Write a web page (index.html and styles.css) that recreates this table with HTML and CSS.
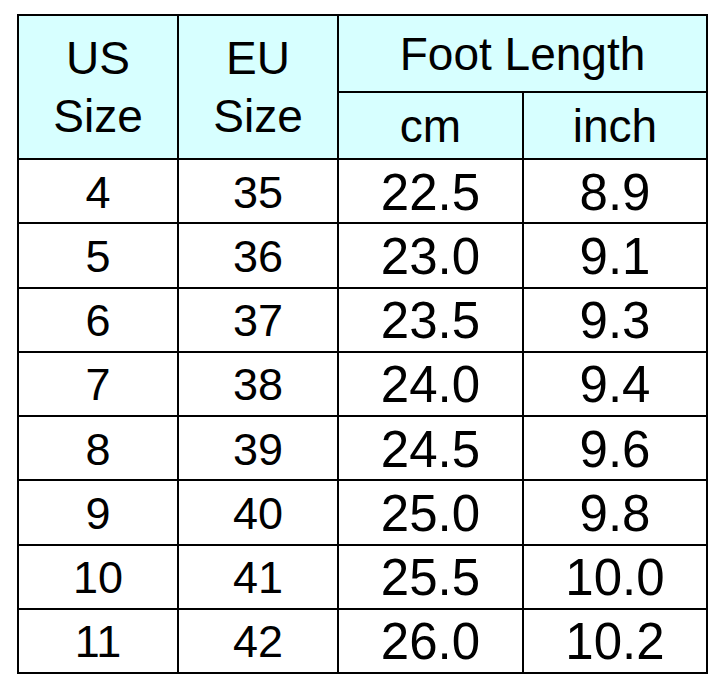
FILE: index.html
```html
<!DOCTYPE html>
<html>
<head>
<meta charset="utf-8">
<link rel="stylesheet" href="styles.css">
</head>
<body>
<div class="chart">
  <div class="cell head span-rows">US<br>Size</div>
  <div class="cell head span-rows">EU<br>Size</div>
  <div class="cell head span-cols">Foot Length</div>
  <div class="cell head">cm</div>
  <div class="cell head">inch</div>

  <div class="cell">4</div><div class="cell">35</div><div class="cell big">22.5</div><div class="cell big">8.9</div>
  <div class="cell">5</div><div class="cell">36</div><div class="cell big">23.0</div><div class="cell big">9.1</div>
  <div class="cell">6</div><div class="cell">37</div><div class="cell big">23.5</div><div class="cell big">9.3</div>
  <div class="cell">7</div><div class="cell">38</div><div class="cell big">24.0</div><div class="cell big">9.4</div>
  <div class="cell">8</div><div class="cell">39</div><div class="cell big">24.5</div><div class="cell big">9.6</div>
  <div class="cell">9</div><div class="cell">40</div><div class="cell big">25.0</div><div class="cell big">9.8</div>
  <div class="cell">10</div><div class="cell">41</div><div class="cell big">25.5</div><div class="cell big">10.0</div>
  <div class="cell">11</div><div class="cell">42</div><div class="cell big">26.0</div><div class="cell big">10.2</div>
</div>
</body>
</html>
```

FILE: styles.css
```css
html, body {
  margin: 0;
  padding: 0;
  background: #ffffff;
}

.chart {
  margin: 14px 0 0 17px;
  display: inline-grid;
  grid-template-columns: 158px 158px 183px 182px;
  grid-template-rows: 75px 65px repeat(8, 62.25px);
  gap: 2px;
  padding: 2px;
  background: #000000;
  font-family: "Liberation Sans", Arial, sans-serif;
  color: #000000;
}

.cell {
  background: #ffffff;
  display: flex;
  align-items: center;
  justify-content: center;
  text-align: center;
  font-size: 45px;
  line-height: 58px;
  padding-top: 3px;
  box-sizing: border-box;
}

.cell.big {
  font-size: 51px;
}

.cell.head {
  background: #d7ffff;
  font-size: 46px;
  padding-top: 0;
}

.span-rows {
  grid-row: span 2;
}

.span-cols {
  grid-column: span 2;
}
```
